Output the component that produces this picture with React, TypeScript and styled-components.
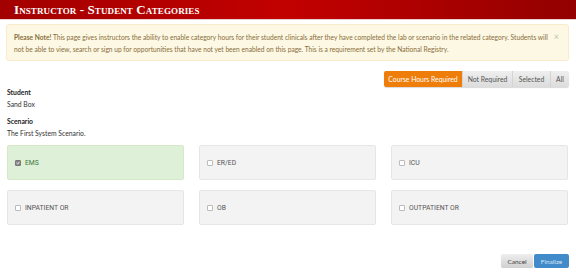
import React, { useState } from "react";
import styled, { createGlobalStyle, css } from "styled-components";

const Global = createGlobalStyle`
  html, body { margin: 0; padding: 0; background: #fff; }
  body { font-family: Lato, "Open Sans", sans-serif; color: #333; }
  * { box-sizing: border-box; }
`;

const Header = styled.div`
  height: 20px;
  background: linear-gradient(to right, #a30000 0%, #c20000 50%, #930000 100%);
  border-bottom: 1px solid #e8d0d0;
  display: flex;
  align-items: center;
  padding-left: 14px;
`;

const Title = styled.h1`
  margin: 0;
  font-family: "Liberation Serif", "DejaVu Serif", serif;
  font-variant: small-caps;
  font-weight: bold;
  font-size: 13px;
  letter-spacing: 0.1px;
  color: #fff;
  line-height: 1;
`;

const Page = styled.div`
  padding: 4px 7px 0 7px;
`;

const Notice = styled.div`
  position: relative;
  margin-left: -1px;
  background: #fcf8e3;
  border: 1px solid #faebcc;
  border-radius: 3px;
  color: #8a6d3b;
  font-size: 6.65px;
  line-height: 12px;
  padding: 6px 14px 5px 7px;
`;

const NoticeText = styled.p`
  margin: 0;
`;

const Strong = styled.strong`
  font-weight: bold;
`;

const Close = styled.span`
  position: absolute;
  right: 9px;
  top: 6px;
  color: #c9bfa8;
  font-size: 9px;
  line-height: 12px;
`;

const FilterRow = styled.div`
  display: flex;
  justify-content: flex-end;
  margin-top: 10px;
`;

const Group = styled.div`
  display: flex;
  border-radius: 2px;
  box-shadow: 0 1px 1px rgba(0, 0, 0, 0.15);
  overflow: hidden;
`;

const FilterBtn = styled.button<{ $active?: boolean; $w: number }>`
  width: ${(p) => p.$w}px;
  height: 16px;
  border: 0;
  border-left: 1px solid #d4d4d4;
  padding: 0;
  font-family: Lato, sans-serif;
  font-size: 6.8px;
  color: #555;
  background: linear-gradient(#efefef, #dcdcdc);
  ${(p) =>
    p.$active &&
    css`
      background: #ee7d0a;
      color: #fff;
      border-left: 0;
    `}
`;

const Info = styled.div`
  margin-top: 0;
`;

const Label = styled.div`
  font-size: 6.8px;
  font-weight: bold;
  color: #222;
  line-height: 10px;
`;

const Value = styled.div`
  font-size: 6.8px;
  color: #333;
  line-height: 10px;
  margin-top: 2px;
  margin-bottom: 7px;
`;

const Grid = styled.div`
  display: grid;
  grid-template-columns: repeat(3, 177px);
  column-gap: 15px;
  row-gap: 10px;
  margin-top: 2px;
`;

const Card = styled.label<{ $on?: boolean }>`
  height: 35px;
  border-radius: 2px;
  border: 1px solid ${(p) => (p.$on ? "#d6e9c6" : "#e6e6e6")};
  background: ${(p) => (p.$on ? "#dff0d8" : "#f3f3f3")};
  color: ${(p) => (p.$on ? "#3c763d" : "#555")};
  display: flex;
  align-items: center;
  padding-left: 7px;
  font-size: 6.8px;
  font-family: Roboto, Lato, sans-serif;
  cursor: pointer;
`;

const Box = styled.span<{ $on?: boolean }>`
  width: 6px;
  height: 6px;
  border-radius: 1px;
  border: 1px solid ${(p) => (p.$on ? "#777" : "#bbb")};
  background: ${(p) => (p.$on ? "#888" : "#fff")};
  margin-right: 4px;
  display: inline-flex;
  align-items: center;
  justify-content: center;
`;

const Footer = styled.div`
  display: flex;
  justify-content: flex-end;
  gap: 1px;
  margin-top: 29px;
`;

const Btn = styled.button<{ $primary?: boolean; $w: number }>`
  width: ${(p) => p.$w}px;
  height: 14px;
  border: 0;
  border-radius: 2px;
  font-family: Lato, sans-serif;
  font-size: 6.5px;
  padding: 0;
  color: ${(p) => (p.$primary ? "#d6e6f5" : "#444")};
  background: ${(p) => (p.$primary ? "#428bca" : "linear-gradient(#eee, #d0d0d0)")};
  box-shadow: ${(p) => (p.$primary ? "none" : "0 1px 1px rgba(0,0,0,0.15)")};
`;

const categories = ["EMS", "ER/ED", "ICU", "INPATIENT OR", "OB", "OUTPATIENT OR"];

export default function App() {
  const [filter, setFilter] = useState("Course Hours Required");
  const [sel, setSel] = useState<string[]>(["EMS"]);
  const filters: [string, number][] = [
    ["Course Hours Required", 78],
    ["Not Required", 50],
    ["Selected", 38],
    ["All", 19],
  ];
  return (
    <>
      <Global />
      <Header>
        <Title>Instructor - Student Categories</Title>
      </Header>
      <Page>
        <Notice>
          <NoticeText>
            <Strong>Please Note!</Strong> This page gives instructors the ability to enable category hours for their student clinicals after they have completed the lab or scenario in the related category. Students will not be able to view, search or sign up for opportunities that have not yet been enabled on this page. This is a requirement set by the National Registry.
          </NoticeText>
          <Close>×</Close>
        </Notice>
        <FilterRow>
          <Group>
            {filters.map(([f, w]) => (
              <FilterBtn key={f} $w={w} $active={filter === f} onClick={() => setFilter(f)}>
                {f}
              </FilterBtn>
            ))}
          </Group>
        </FilterRow>
        <Info>
          <Label>Student</Label>
          <Value>Sand Box</Value>
          <Label>Scenario</Label>
          <Value>The First System Scenario.</Value>
        </Info>
        <Grid>
          {categories.map((c) => {
            const on = sel.includes(c);
            return (
              <Card
                key={c}
                $on={on}
                onClick={() => setSel(on ? sel.filter((x) => x !== c) : [...sel, c])}
              >
                <Box $on={on}>
                  {on && (
                    <svg width="4" height="4" viewBox="0 0 4 4">
                      <path d="M0.5 2 L1.6 3 L3.5 0.8" stroke="#fff" strokeWidth="0.8" fill="none" />
                    </svg>
                  )}
                </Box>
                {c}
              </Card>
            );
          })}
        </Grid>
        <Footer>
          <Btn $w={32}>Cancel</Btn>
          <Btn $w={35} $primary>
            Finalize
          </Btn>
        </Footer>
      </Page>
    </>
  );
}
